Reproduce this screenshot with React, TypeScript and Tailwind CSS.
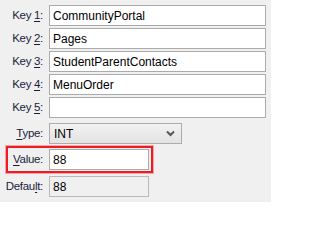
import React from 'react'

const font = { fontFamily: '"Liberation Sans", Arial, sans-serif' }

function Label({ pre, u, post, w = 'w-[44px]' }: { pre: string; u: string; post: string; w?: string }) {
  return (
    <span className={`${w} shrink-0 pr-[1px] text-right text-[11.5px] tracking-[-0.3px] text-[#1c1c3a]`}>
      {pre}
      <span className="underline underline-offset-2">{u}</span>
      {post}
    </span>
  )
}

function TextRow({ n, value }: { n: string; value: string }) {
  return (
    <div className="flex h-[21px] items-center gap-[5px]">
      <Label pre="Key " u={n} post=":" />
      <div className="flex h-[21px] w-[217px] items-center border border-[#ababab] bg-white px-[3px] text-[12px] text-black">
        {value}
      </div>
    </div>
  )
}

export default function App() {
  return (
    <div className="h-[202px] w-[271px] bg-[#f0f0f0] pt-[5px]" style={font}>
      <div className="flex flex-col gap-[2px]">
        <TextRow n="1" value="CommunityPortal" />
        <TextRow n="2" value="Pages" />
        <TextRow n="3" value="StudentParentContacts" />
        <TextRow n="4" value="MenuOrder" />
        <TextRow n="5" value="" />
      </div>

      {/* Type */}
      <div className="mt-[5px] flex h-[21px] items-center gap-[5px]">
        <Label pre="" u="T" post="ype:" />
        <div className="flex h-[21px] w-[133px] items-center justify-between border border-[#acacac] bg-gradient-to-b from-[#f2f2f2] to-[#e3e3e3] pl-[4px] pr-[6px] text-[12px] text-black">
          <span>INT</span>
          <svg width="9" height="7" viewBox="0 0 9 7">
            <path d="M1 1.5 L4.5 5 L8 1.5" fill="none" stroke="#555" strokeWidth="2" />
          </svg>
        </div>
      </div>

      {/* Value */}
      <div className="ml-[6px] mt-[2px] flex h-[27px] w-[147px] items-center gap-[5px] border-2 border-[#ec1c24] pr-[2px] shadow-[0_0_0_1px_#f7a5a8]">
        <Label pre="" u="V" post="alue:" w="w-[36px]" />
        <div className="flex h-[21px] w-[100px] items-center border border-[#ababab] bg-white px-[3px] text-[12px] text-black">
          88
        </div>
      </div>

      {/* Default */}
      <div className="mt-[3px] flex h-[21px] items-center gap-[5px]">
        <Label pre="Defau" u="l" post="t:" />
        <div className="flex h-[21px] w-[100px] items-center border border-[#b9b9b9] bg-[#f0f0f0] px-[3px] text-[12px] text-black">
          88
        </div>
      </div>
    </div>
  )
}
